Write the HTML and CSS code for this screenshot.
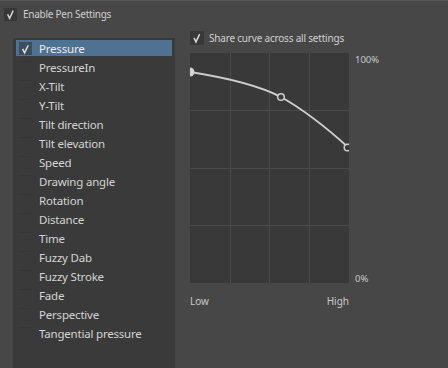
FILE: index.html
```html
<!DOCTYPE html>
<html>
<head>
<meta charset="utf-8">
<link rel="stylesheet" href="styles.css">
</head>
<body>
<div class="page">
  <div class="enable">
    <span class="check"><svg width="13" height="13" viewBox="0 0 13 13"><path d="M3.6,6.4 L5.6,10.3 L9.2,2.6" fill="none" stroke="#d6d6d6" stroke-width="1.5"/></svg></span>
    <span class="enable-label">Enable Pen Settings</span>
  </div>
  <div class="main">
    <ul class="list">
      <li class="row selected"><span class="box"><svg width="13" height="12" viewBox="0 0 13 12"><path d="M3.6,5.8 L5.6,9.8 L9.2,2.2" fill="none" stroke="#e2e2e2" stroke-width="1.5"/></svg></span><span class="name">Pressure</span></li>
      <li class="row"><span class="box"></span><span class="name">PressureIn</span></li>
      <li class="row"><span class="box"></span><span class="name">X-Tilt</span></li>
      <li class="row"><span class="box"></span><span class="name">Y-Tilt</span></li>
      <li class="row"><span class="box"></span><span class="name">Tilt direction</span></li>
      <li class="row"><span class="box"></span><span class="name">Tilt elevation</span></li>
      <li class="row"><span class="box"></span><span class="name">Speed</span></li>
      <li class="row"><span class="box"></span><span class="name">Drawing angle</span></li>
      <li class="row"><span class="box"></span><span class="name">Rotation</span></li>
      <li class="row"><span class="box"></span><span class="name">Distance</span></li>
      <li class="row"><span class="box"></span><span class="name">Time</span></li>
      <li class="row"><span class="box"></span><span class="name">Fuzzy Dab</span></li>
      <li class="row"><span class="box"></span><span class="name">Fuzzy Stroke</span></li>
      <li class="row"><span class="box"></span><span class="name">Fade</span></li>
      <li class="row"><span class="box"></span><span class="name">Perspective</span></li>
      <li class="row"><span class="box"></span><span class="name">Tangential pressure</span></li>
    </ul>
    <div class="panel">
      <div class="share">
        <span class="check share-check"><svg width="14" height="14" viewBox="0 0 14 14"><path d="M4,6.9 L6,10.9 L9.6,3.1" fill="none" stroke="#d6d6d6" stroke-width="1.5"/></svg></span>
        <span class="share-label">Share curve across all settings</span>
      </div>
      <div class="graph-row">
        <svg class="graph" width="159" height="230" viewBox="0 0 159 230">
          <rect x="0" y="0" width="159" height="230" fill="#393939"/>
          <g stroke="#4a4a4a" stroke-width="1">
            <line x1="40.5" y1="0" x2="40.5" y2="230"/>
            <line x1="79.5" y1="0" x2="79.5" y2="230"/>
            <line x1="119.5" y1="0" x2="119.5" y2="230"/>
            <line x1="0" y1="57.5" x2="159" y2="57.5"/>
            <line x1="0" y1="115.5" x2="159" y2="115.5"/>
            <line x1="0" y1="172.5" x2="159" y2="172.5"/>
          </g>
          <path d="M0,19 C32,24 66,31 91,44 C116,58 138,76 159,95" fill="none" stroke="#cdcdcd" stroke-width="2"/>
          <circle cx="0" cy="19" r="4.5" fill="#d4d4d4"/>
          <circle cx="91" cy="44" r="3.3" fill="#393939" stroke="#cdcdcd" stroke-width="1.5"/>
          <circle cx="157.5" cy="94.5" r="3.3" fill="#393939" stroke="#cdcdcd" stroke-width="1.5"/>
        </svg>
        <div class="scale">
          <span>100%</span>
          <span>0%</span>
        </div>
      </div>
      <div class="axis">
        <span>Low</span>
        <span>High</span>
      </div>
    </div>
  </div>
</div>
</body>
</html>
```

FILE: styles.css
```css
html, body {
  margin: 0;
  padding: 0;
}
body {
  background: #474747;
  width: 448px;
  height: 368px;
  overflow: hidden;
  font-family: "Noto Sans", "Open Sans", sans-serif;
  color: #d2d2d2;
}
.page {
  border-top: 1px solid #575757;
  height: 367px;
}
.enable {
  display: flex;
  align-items: center;
  padding: 6px 0 0 4px;
  height: 14px;
}
.check {
  width: 13px;
  height: 13px;
  background: #383838;
  display: block;
  flex: none;
}
.check svg,
.box svg {
  display: block;
}
.enable-label {
  margin-left: 6px;
  font-size: 10px;
  letter-spacing: -0.25px;
  color: #d0d0d0;
}
.main {
  display: flex;
  margin-top: 10px;
}
.list {
  list-style: none;
  margin: 7px 0 0 13px;
  padding: 2px 3px 0 3px;
  width: 156px;
  height: 340px;
  background: #3a3a3a;
  display: flex;
  flex-direction: column;
  gap: 3px;
}
.row {
  height: 16px;
  display: flex;
  align-items: center;
}
.row.selected {
  background: #4f7293;
}
.box {
  width: 13px;
  height: 12px;
  margin-left: 3px;
  border-top: 1px solid #363636;
  flex: none;
}
.selected .box {
  background: #3d4d5c;
  border-top-color: #3d4d5c;
}
.name {
  margin-left: 7px;
  font-size: 11.5px;
  letter-spacing: -0.2px;
  color: #d4d4d4;
  white-space: nowrap;
}
.selected .name {
  color: #ececec;
}
.panel {
  margin-left: 15px;
  display: flex;
  flex-direction: column;
}
.share {
  display: flex;
  align-items: center;
  height: 14px;
}
.share-check {
  width: 14px;
  height: 14px;
}
.share-label {
  margin-left: 5px;
  font-size: 10px;
  letter-spacing: -0.2px;
  color: #d0d0d0;
}
.graph-row {
  display: flex;
  margin-top: 8px;
}
.graph {
  display: block;
}
.scale {
  margin-left: 6px;
  display: flex;
  flex-direction: column;
  justify-content: space-between;
  font-size: 9.5px;
  color: #c8c8c8;
  height: 232px;
}
.axis {
  width: 159px;
  display: flex;
  justify-content: space-between;
  margin-top: 9px;
  font-size: 10px;
  color: #c8c8c8;
}
```
